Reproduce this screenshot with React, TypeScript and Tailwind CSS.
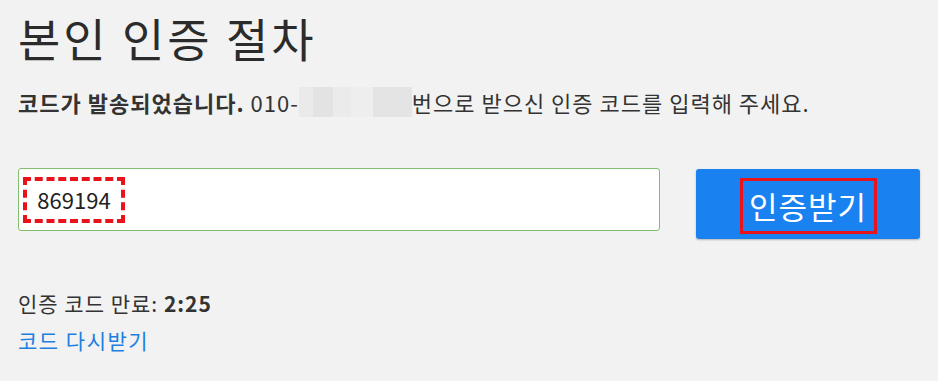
export default function App() {
  return (
    <div
      className="w-[938px] h-[381px] bg-[#f2f2f2] text-[#333333] overflow-hidden"
      style={{ fontFamily: '"Noto Sans CJK KR", "Noto Sans", sans-serif' }}
    >
      <div className="pl-[18px] pr-[18px] pt-[7px]">
        <h1 className="text-[46px] leading-[60px] tracking-[3px] font-normal text-[#2b2b2b]">본인 인증 절차</h1>

        <p className="mt-[20px] text-[22px] leading-[30px] tracking-[1px] flex items-center">
          <span className="font-bold">코드가 발송되었습니다.</span>
          <span className="ml-[6px]">010-</span>
          <span className="inline-flex h-[30px] w-[113px] bg-[#e6e6e6]">
            <span className="w-[14px] bg-[#eaeaea]" />
            <span className="w-[20px] bg-[#e3e3e3]" />
            <span className="w-[18px] bg-[#ebebeb]" />
            <span className="w-[22px] bg-[#eeeeee]" />
            <span className="w-[39px] bg-[#e4e4e4]" />
          </span>
          <span>번으로 받으신 인증 코드를 입력해 주세요.</span>
        </p>

        <div className="mt-[51px] flex items-start">
          <div className="w-[642px] h-[63px] bg-white border border-[#82be6e] rounded-[3px] flex items-center pl-[4px]">
            <div className="border-[4px] border-dashed border-[#e8131b] h-[46px] w-[102px] flex items-center justify-center">
              <span className="text-[22px] text-[#222]">869194</span>
            </div>
          </div>
          <button className="mt-[1px] ml-[36px] w-[224px] h-[70px] bg-[#1a82f0] rounded-[3px] flex items-center justify-center shadow-[0_1px_2px_rgba(0,0,0,0.25)]">
            <span className="mt-[4px] border-[3px] border-[#e8131b] h-[56px] w-[137px] flex items-center justify-center text-white text-[31px] tracking-[1px]">
              인증받기
            </span>
          </button>
        </div>

        <div className="mt-[49px] text-[21px] leading-[30px] tracking-[1px]">
          <p>
            인증 코드 만료: <span className="font-bold">2:25</span>
          </p>
          <p className="text-[#1e7fe0] mt-[7px] tracking-[1.5px]">코드 다시받기</p>
        </div>
      </div>
    </div>
  );
}
